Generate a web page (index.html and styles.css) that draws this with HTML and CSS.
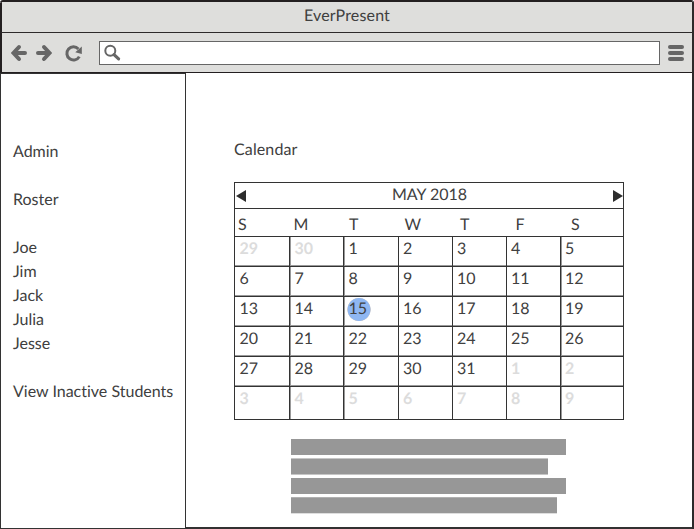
FILE: index.html
```html
<!DOCTYPE html>
<html lang="en">
<head>
<meta charset="utf-8">
<title>EverPresent</title>
<link rel="stylesheet" href="styles.css">
</head>
<body>
<div class="window">
  <header class="titlebar">EverPresent</header>
  <div class="toolbar">
    <svg class="nav" width="100" height="39" viewBox="0 0 100 39" fill="none" stroke="#666" stroke-width="4" stroke-linecap="round" stroke-linejoin="miter">
      <path d="M13 20H24M18 14L12.500 20L18 26"/>
      <path d="M37 20H48M43 14L48.500 20L43 26"/>
      <path d="M77.400 16A6.600 6.600 0 1 0 78.300 23.600" stroke-width="3" stroke-linecap="butt"/>
      <path d="M80.800 13.500V21L74.300 19.300Z" fill="#666" stroke="none"/>
    </svg>
    <div class="address">
      <svg width="20" height="20" viewBox="0 0 20 20" fill="none" stroke="#666">
        <circle cx="7.300" cy="7.700" r="5" stroke-width="2"/>
        <path d="M11 11.600L15.600 15.900" stroke-width="3.200" stroke-linecap="round"/>
      </svg>
    </div>
    <div class="menu"><i></i><i></i><i></i></div>
  </div>
  <div class="content">
    <nav class="sidebar">
      <p>Admin</p>
      <p>Roster</p>
      <ul><li>Joe</li><li>Jim</li><li>Jack</li><li>Julia</li><li>Jesse</li></ul>
      <p>View Inactive Students</p>
    </nav>
    <main class="main">
      <h1>Calendar</h1>
      <section class="calendar">
        <div class="month">
          <svg width="10" height="12" viewBox="0 0 10 12"><path d="M0 6L10 0V12Z" fill="#2d2d2d"/></svg>
          <span>MAY 2018</span>
          <svg width="10" height="12" viewBox="0 0 10 12"><path d="M10 6L0 0V12Z" fill="#2d2d2d"/></svg>
        </div>
        <div class="weekdays"><span>S</span><span>M</span><span>T</span><span>W</span><span>T</span><span>F</span><span>S</span></div>
        <div class="days">
          <span class="out">29</span><span class="out">30</span><span>1</span><span>2</span><span>3</span><span>4</span><span>5</span>
          <span>6</span><span>7</span><span>8</span><span>9</span><span>10</span><span>11</span><span>12</span>
          <span>13</span><span>14</span><span class="today">15</span><span>16</span><span>17</span><span>18</span><span>19</span>
          <span>20</span><span>21</span><span>22</span><span>23</span><span>24</span><span>25</span><span>26</span>
          <span>27</span><span>28</span><span>29</span><span>30</span><span>31</span><span class="out">1</span><span class="out">2</span>
          <span class="out">3</span><span class="out">4</span><span class="out">5</span><span class="out">6</span><span class="out">7</span><span class="out">8</span><span class="out">9</span>
        </div>
      </section>
      <div class="notes"><div class="full"></div><div class="short"></div><div class="full"></div><div class="medium"></div></div>
    </main>
  </div>
</div>
</body>
</html>
```

FILE: styles.css
```css
* { box-sizing: border-box; margin: 0; padding: 0; }
body { background: #fff; color: #404040; font: 16px/24px Lato, sans-serif; font-variant-ligatures: none; text-rendering: geometricPrecision; }
.window {
  width: 694px; height: 529px; overflow: hidden;
  display: flex; flex-direction: column;
  border-top: 2px solid #231f20; border-right: 2px solid #2d2a2b;
  border-radius: 3px 3px 0 0;
}
.titlebar {
  flex: 0 0 31px; padding-top: 2px; text-align: center; letter-spacing: .15px;
  background: #dededc; border-bottom: 1px solid #2d2a2b; border-left: 2px solid #231f20;
}
.toolbar {
  flex: 0 0 40px; display: flex; align-items: flex-start;
  background: #dededc; border-bottom: 1px solid #231f20; border-left: 2px solid #231f20;
}
.nav { flex: none; margin-left: -1px; }
.address {
  width: 561px; height: 24px; margin: 8px 0 0 -2px; padding: 1px 0 0 3px;
  background: #fff; border: 1px solid #666;
}
.address svg { display: block; }
.menu { display: flex; flex-direction: column; gap: 2px; margin: 12px 0 0 8px; }
.menu i { width: 16px; height: 4px; border-radius: 2px; background: #666; }
.content { flex: 1; display: flex; }
.sidebar {
  width: 186px; padding: 66px 0 0 12px; white-space: nowrap;
  border: 1px solid #333;
}
.sidebar p, .sidebar ul { margin-bottom: 24px; list-style: none; }
.main { flex: 1; padding: 65px 0 0 48px; border-bottom: 2px solid #333132; }
h1 { font-size: 16px; font-weight: 400; line-height: 24px; letter-spacing: .12px; }
.calendar { width: 390px; margin-top: 20px; border: 1px solid #333; }
.month {
  height: 26px; display: flex; align-items: center; justify-content: space-between;
  padding: 0 0 0 1px; border-bottom: 1px solid #333;
}
.month span { height: 24px; margin-top: -1px; }
.weekdays {
  height: 28px; display: grid; grid-template-columns: repeat(7, 55.5px);
  padding: 4px 0 0 3px; border-bottom: 1px solid #333;
}
.days {
  display: grid; grid-template-columns: 55px 54px 55px 54px 54px 54px 62px;
  grid-template-rows: repeat(5, 30px) 32px;
}
.days span { padding-left: 4px; border-right: 1px solid #333; border-bottom: 1px solid #333; box-shadow: inset 0 -1px #999; }
.days span:nth-child(7n+1), .days span:nth-child(7n+2), .days span:nth-child(7n+3) { padding-left: 4.5px; }
.days span:nth-child(7n+2), .days span:nth-child(7n+3), .days span:nth-child(7n) { box-shadow: inset 1px -1px #999; }
.days span:nth-child(7n) { border-right: 0; }
.days span:nth-child(n+36) { border-bottom: 0; box-shadow: none; }
.days span:nth-child(37), .days span:nth-child(38), .days span:nth-child(42) { box-shadow: inset 1px 0 #999; }
.days .out { color: #dcdcdc; font-weight: 700; }
.days .today { background: radial-gradient(circle at 15px 12.5px, #8fb7f2 11px, #c3cad6 11.5px, transparent 12px); }
.notes { margin: 19px 0 0 57px; display: grid; gap: 3px; }
.notes div { height: 16px; background: #979797; }
.notes .full { width: 275px; }
.notes .short { width: 257px; height: 17px; border-top: 1px solid #c6c6c6; border-bottom: 1px solid #c6c6c6; }
.notes .medium { width: 266px; height: 17px; border-top: 1px solid #b0b0b0; border-bottom: 1px solid #dedede; }
```
